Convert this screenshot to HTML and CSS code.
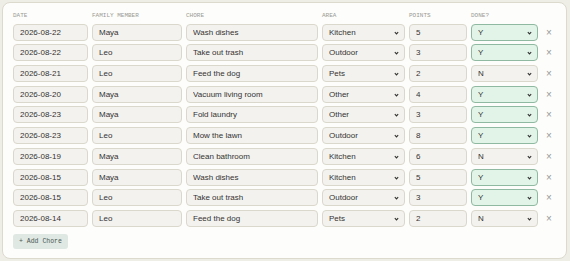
FILE: index.html
```html
<html>
<head>
    <title>Chore Log</title>
    <link rel="stylesheet" href="styles.css">
</head>
<body>
    <div class="chore-card">
        <div class="chore-grid">
            <div class="col-label">Date</div>
            <div class="col-label">Family Member</div>
            <div class="col-label">Chore</div>
            <div class="col-label">Area</div>
            <div class="col-label">Points</div>
            <div class="col-label">Done?</div>
            <div></div>

            <!-- rows -->
            <input class="field" type="text" value="2026-08-22">
            <input class="field" type="text" value="Maya">
            <input class="field" type="text" value="Wash dishes">
            <div class="select-wrap"><select class="field"><option>Kitchen</option></select><svg class="chev" viewBox="0 0 6 4"><path d="M1 1 L3 3 L5 1"/></svg></div>
            <input class="field" type="text" value="5">
            <div class="select-wrap"><select class="field done-yes"><option>Y</option></select><svg class="chev" viewBox="0 0 6 4"><path d="M1 1 L3 3 L5 1"/></svg></div>
            <span class="remove">&times;</span>

            <input class="field" type="text" value="2026-08-22">
            <input class="field" type="text" value="Leo">
            <input class="field" type="text" value="Take out trash">
            <div class="select-wrap"><select class="field"><option>Outdoor</option></select><svg class="chev" viewBox="0 0 6 4"><path d="M1 1 L3 3 L5 1"/></svg></div>
            <input class="field" type="text" value="3">
            <div class="select-wrap"><select class="field done-yes"><option>Y</option></select><svg class="chev" viewBox="0 0 6 4"><path d="M1 1 L3 3 L5 1"/></svg></div>
            <span class="remove">&times;</span>

            <input class="field" type="text" value="2026-08-21">
            <input class="field" type="text" value="Leo">
            <input class="field" type="text" value="Feed the dog">
            <div class="select-wrap"><select class="field"><option>Pets</option></select><svg class="chev" viewBox="0 0 6 4"><path d="M1 1 L3 3 L5 1"/></svg></div>
            <input class="field" type="text" value="2">
            <div class="select-wrap"><select class="field"><option>N</option></select><svg class="chev" viewBox="0 0 6 4"><path d="M1 1 L3 3 L5 1"/></svg></div>
            <span class="remove">&times;</span>

            <input class="field" type="text" value="2026-08-20">
            <input class="field" type="text" value="Maya">
            <input class="field" type="text" value="Vacuum living room">
            <div class="select-wrap"><select class="field"><option>Other</option></select><svg class="chev" viewBox="0 0 6 4"><path d="M1 1 L3 3 L5 1"/></svg></div>
            <input class="field" type="text" value="4">
            <div class="select-wrap"><select class="field done-yes"><option>Y</option></select><svg class="chev" viewBox="0 0 6 4"><path d="M1 1 L3 3 L5 1"/></svg></div>
            <span class="remove">&times;</span>

            <input class="field" type="text" value="2026-08-23">
            <input class="field" type="text" value="Maya">
            <input class="field" type="text" value="Fold laundry">
            <div class="select-wrap"><select class="field"><option>Other</option></select><svg class="chev" viewBox="0 0 6 4"><path d="M1 1 L3 3 L5 1"/></svg></div>
            <input class="field" type="text" value="3">
            <div class="select-wrap"><select class="field done-yes"><option>Y</option></select><svg class="chev" viewBox="0 0 6 4"><path d="M1 1 L3 3 L5 1"/></svg></div>
            <span class="remove">&times;</span>

            <input class="field" type="text" value="2026-08-23">
            <input class="field" type="text" value="Leo">
            <input class="field" type="text" value="Mow the lawn">
            <div class="select-wrap"><select class="field"><option>Outdoor</option></select><svg class="chev" viewBox="0 0 6 4"><path d="M1 1 L3 3 L5 1"/></svg></div>
            <input class="field" type="text" value="8">
            <div class="select-wrap"><select class="field done-yes"><option>Y</option></select><svg class="chev" viewBox="0 0 6 4"><path d="M1 1 L3 3 L5 1"/></svg></div>
            <span class="remove">&times;</span>

            <input class="field" type="text" value="2026-08-19">
            <input class="field" type="text" value="Maya">
            <input class="field" type="text" value="Clean bathroom">
            <div class="select-wrap"><select class="field"><option>Kitchen</option></select><svg class="chev" viewBox="0 0 6 4"><path d="M1 1 L3 3 L5 1"/></svg></div>
            <input class="field" type="text" value="6">
            <div class="select-wrap"><select class="field"><option>N</option></select><svg class="chev" viewBox="0 0 6 4"><path d="M1 1 L3 3 L5 1"/></svg></div>
            <span class="remove">&times;</span>

            <input class="field" type="text" value="2026-08-15">
            <input class="field" type="text" value="Maya">
            <input class="field" type="text" value="Wash dishes">
            <div class="select-wrap"><select class="field"><option>Kitchen</option></select><svg class="chev" viewBox="0 0 6 4"><path d="M1 1 L3 3 L5 1"/></svg></div>
            <input class="field" type="text" value="5">
            <div class="select-wrap"><select class="field done-yes"><option>Y</option></select><svg class="chev" viewBox="0 0 6 4"><path d="M1 1 L3 3 L5 1"/></svg></div>
            <span class="remove">&times;</span>

            <input class="field" type="text" value="2026-08-15">
            <input class="field" type="text" value="Leo">
            <input class="field" type="text" value="Take out trash">
            <div class="select-wrap"><select class="field"><option>Outdoor</option></select><svg class="chev" viewBox="0 0 6 4"><path d="M1 1 L3 3 L5 1"/></svg></div>
            <input class="field" type="text" value="3">
            <div class="select-wrap"><select class="field done-yes"><option>Y</option></select><svg class="chev" viewBox="0 0 6 4"><path d="M1 1 L3 3 L5 1"/></svg></div>
            <span class="remove">&times;</span>

            <input class="field" type="text" value="2026-08-14">
            <input class="field" type="text" value="Leo">
            <input class="field" type="text" value="Feed the dog">
            <div class="select-wrap"><select class="field"><option>Pets</option></select><svg class="chev" viewBox="0 0 6 4"><path d="M1 1 L3 3 L5 1"/></svg></div>
            <input class="field" type="text" value="2">
            <div class="select-wrap"><select class="field"><option>N</option></select><svg class="chev" viewBox="0 0 6 4"><path d="M1 1 L3 3 L5 1"/></svg></div>
            <span class="remove">&times;</span>
        </div>

        <button class="add-btn" type="button">+ Add Chore</button>
    </div>
</body>
</html>
```

FILE: styles.css
```css
body {
    margin: 0;
    padding: 2px;
    background-color: #eeede6;
    font-family: 'Liberation Sans', Arial, sans-serif;
    color: #333;
}

.chore-card {
    width: 543px;
    padding: 9px 10px 9px 10px;
    background-color: #fdfdfb;
    border: 1px solid #dcd9cd;
    border-radius: 8px;
}

.chore-grid {
    display: grid;
    grid-template-columns: 75px 90px 132px 83px 58px 67px 1fr;
    column-gap: 4px;
    row-gap: 3.7px;
    align-items: center;
}

.col-label {
    font-family: 'Liberation Mono', 'DejaVu Sans Mono', monospace;
    font-size: 6px;
    color: #9a9a94;
    text-transform: uppercase;
    line-height: 7px;
    margin-bottom: 1px;
}

.field {
    box-sizing: border-box;
    width: 100%;
    height: 17px;
    margin: 0;
    padding: 0 6px;
    border: 1px solid #dad7cc;
    border-radius: 4px;
    background-color: #f3f2ee;
    font-family: 'Liberation Sans', Arial, sans-serif;
    font-size: 8px;
    color: #333;
    outline: none;
    display: block;
}

select.field {
    appearance: none;
    -webkit-appearance: none;
    padding: 0 6px;
}

.field.done-yes {
    background-color: #e2f3e8;
    border-color: #8fb9a0;
}

.select-wrap {
    position: relative;
}

.chev {
    position: absolute;
    right: 6px;
    top: 7px;
    width: 5px;
    height: 4px;
    fill: none;
    stroke: #333;
    stroke-width: 1.4;
    pointer-events: none;
}

.remove {
    font-size: 10px;
    color: #999;
    text-align: center;
    line-height: 17px;
    cursor: pointer;
}

.add-btn {
    display: block;
    margin-top: 7px;
    height: 15px;
    padding: 0 6px;
    border: none;
    border-radius: 3px;
    background-color: #dfe8e3;
    color: #4a5752;
    font-family: 'Liberation Mono', 'DejaVu Sans Mono', monospace;
    font-size: 6.5px;
    cursor: pointer;
}
```
